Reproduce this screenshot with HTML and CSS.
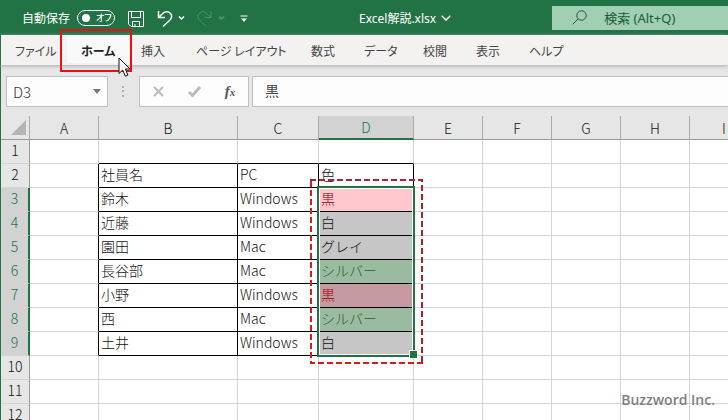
FILE: index.html
```html
<!DOCTYPE html>
<html lang="ja">
<head>
<meta charset="utf-8">
<meta name="viewport" content="width=device-width, initial-scale=1">
<title>Excel解説.xlsx</title>
<link rel="stylesheet" href="styles.css">
</head>
<body>
<header class="titlebar">
  <span class="autosave-label" id="autosave-label">自動保存</span>
  <button class="toggle" type="button" role="switch" aria-checked="false" aria-labelledby="autosave-label"><span class="knob"></span><span class="toggle-text">オフ</span></button>
  <button class="icon-btn save" type="button" aria-label="上書き保存">
    <svg width="16" height="16" viewBox="0 0 16 16"><path d="M.5.5h15v15H3L.5 13zM3.500.5v6h9v-6M4.500 15.500v-5h7v5M7 15v-2"/></svg>
  </button>
  <button class="icon-btn undo" type="button" aria-label="元に戻す">
    <svg width="28" height="18" viewBox="0 0 28 18"><path class="thick" d="M1.500 1v6.500H8M1.500 7.500L6 3.200C8 1.300 11.500 1.300 13.300 3.300S14.800 8 13 10L6 16.500"/><path class="thick" d="M22 6.500l2.500 2.500L27 6.500"/></svg>
  </button>
  <button class="icon-btn redo" type="button" aria-label="やり直し" disabled>
    <svg width="28" height="18" viewBox="0 0 28 18"><path d="M14 1v6.500H7.500M14 7.500L9.500 3.200C7.500 1.300 4 1.300 2.200 3.300S.7 8 2.500 10L9 16.500"/><path class="thick" d="M22 6.500l2.500 2.500L27 6.500"/></svg>
  </button>
  <button class="icon-btn more" type="button" aria-label="クイック アクセス ツール バーのカスタマイズ">
    <svg width="8" height="8" viewBox="0 0 8 8"><path d="M.5 1h7"/><path class="solid" d="M1 3.500L4 7l3-3.500z"/></svg>
  </button>
  <button class="filename" type="button">Excel解説.xlsx
    <svg width="10" height="6" viewBox="0 0 10 6"><path d="M.7.7L5 5 9.300.7"/></svg>
  </button>
  <label class="search">
    <svg width="15" height="15" viewBox="0 0 15 15"><circle cx="9.500" cy="5.500" r="4.700"/><path d="M6 9L.7 14.300"/></svg>
    <input type="text" placeholder="検索 (Alt+Q)" aria-label="検索">
  </label>
</header>

<nav class="tabs" aria-label="リボン">
  <a href="#">ファイル</a>
  <a href="#" class="active" aria-current="page">ホーム</a>
  <a href="#">挿入</a>
  <a href="#">ページ レイアウト</a>
  <a href="#">数式</a>
  <a href="#">データ</a>
  <a href="#">校閲</a>
  <a href="#">表示</a>
  <a href="#">ヘルプ</a>
  <span class="callout"></span>
  <svg class="cursor" width="14" height="21" viewBox="0 0 14 21"><path d="M1 1v15.500l3.700-3.500 2.600 6.200 2.600-1.100L7.300 12H12z"/></svg>
</nav>

<main class="workbook">
  <section class="formula-row" aria-label="数式バー">
    <button class="namebox" type="button">D3
      <svg width="8" height="5" viewBox="0 0 8 5"><path d="M0 0h8L4 5z"/></svg>
    </button>
    <svg class="grip" width="2" height="11" viewBox="0 0 2 11"><path d="M0 0h2v2H0zM0 4h2v2H0zM0 9h2v2H0z"/></svg>
    <div class="fx-buttons">
      <button type="button" aria-label="キャンセル"><svg width="11" height="11" viewBox="0 0 11 11"><path d="M1 1l9 9M10 1l-9 9"/></svg></button>
      <button type="button" aria-label="入力"><svg width="13" height="11" viewBox="0 0 13 11"><path class="check" d="M1 6l3.500 3.500L12 1"/></svg></button>
      <button type="button" class="fx" aria-label="関数の挿入">f<small>x</small></button>
    </div>
    <input class="formula" type="text" value="黒" aria-label="数式">
  </section>

  <div class="sheet">
    <table>
      <colgroup><col class="c-head"><col class="c-std"><col class="c-b"><col class="c-c"><col class="c-d"><col class="c-std"><col class="c-std"><col class="c-std"><col class="c-std"><col class="c-std"></colgroup>
      <thead>
        <tr><th class="corner"><svg width="15" height="15" viewBox="0 0 15 15"><path d="M15 0v15H0z"/></svg></th><th>A</th><th>B</th><th>C</th><th class="sel">D</th><th>E</th><th>F</th><th>G</th><th>H</th><th>I</th></tr>
      </thead>
      <tbody>
        <tr><th>1</th><td></td><td class="kb"></td><td class="kb"></td><td class="kb"></td><td></td><td></td><td></td><td></td><td></td></tr>
        <tr><th>2</th><td class="kr"></td><td class="k">社員名</td><td class="k">PC</td><td class="k">色</td><td></td><td></td><td></td><td></td><td></td></tr>
        <tr class="on"><th>3</th><td class="kr"></td><td class="k">鈴木</td><td class="k">Windows</td><td class="k pink">黒</td><td></td><td></td><td></td><td></td><td></td></tr>
        <tr class="on"><th>4</th><td class="kr"></td><td class="k">近藤</td><td class="k">Windows</td><td class="k gray">白</td><td></td><td></td><td></td><td></td><td></td></tr>
        <tr class="on"><th>5</th><td class="kr"></td><td class="k">園田</td><td class="k">Mac</td><td class="k gray">グレイ</td><td></td><td></td><td></td><td></td><td></td></tr>
        <tr class="on"><th>6</th><td class="kr"></td><td class="k">長谷部</td><td class="k">Mac</td><td class="k green">シルバー</td><td></td><td></td><td></td><td></td><td></td></tr>
        <tr class="on"><th>7</th><td class="kr"></td><td class="k">小野</td><td class="k">Windows</td><td class="k rose">黒</td><td></td><td></td><td></td><td></td><td></td></tr>
        <tr class="on"><th>8</th><td class="kr"></td><td class="k">西</td><td class="k">Mac</td><td class="k green">シルバー</td><td></td><td></td><td></td><td></td><td></td></tr>
        <tr class="on"><th>9</th><td class="kr"></td><td class="k">土井</td><td class="k">Windows</td><td class="k gray">白</td><td></td><td></td><td></td><td></td><td></td></tr>
        <tr><th>10</th><td></td><td></td><td></td><td></td><td></td><td></td><td></td><td></td><td></td></tr>
        <tr><th>11</th><td></td><td></td><td></td><td></td><td></td><td></td><td></td><td></td><td></td></tr>
        <tr><th>12</th><td></td><td></td><td></td><td></td><td></td><td></td><td></td><td></td><td></td></tr>
      </tbody>
    </table>
    <span class="selection"></span>
    <svg class="marquee" width="114" height="185" viewBox="0 0 114 185"><path class="dark" d="M0 1h112v183"/><path class="bright" d="M1 2v182h112"/></svg>
  </div>
</main>
<span class="credit">Buzzword Inc.</span>
</body>
</html>
```
FILE: styles.css
```css
* { box-sizing: border-box; }
body {
  margin: 0;
  height: 100vh;
  overflow: hidden;
  display: flex;
  flex-direction: column;
  position: relative;
  background: #e6e6e6;
  font-family: "Noto Sans", "Noto Sans CJK JP", sans-serif;
  font-size: 12px;
  color: #262626;
}
button, input { font: inherit; color: inherit; border: 0; padding: 0; margin: 0; background: none; }
svg { display: block; fill: none; stroke: currentColor; flex: none; }

.titlebar {
  flex: none;
  display: flex;
  align-items: center;
  height: 35px;
  padding-left: 22px;
  background: #217346;
  color: #fff;
}
.autosave-label { width: 48px; white-space: nowrap; }
.toggle {
  display: flex;
  align-items: center;
  gap: 6px;
  width: 38px;
  height: 16px;
  margin-left: 7px;
  padding-left: 4px;
  border: 1px solid #fff;
  border-radius: 8px;
}
.knob { width: 8px; height: 8px; border-radius: 50%; background: #fff; }
.toggle-text { font-family: "Noto Sans CJK JP", sans-serif; font-feature-settings: "palt"; font-size: 9px; font-weight: 500; line-height: 14px; }
.icon-btn { margin-top: 3px; }
.save { margin-left: 13px; }
.undo { margin-left: 13px; }
.redo { margin-left: 12px; color: #4a9069; }
.more { margin-left: 15px; }
.solid { fill: currentColor; stroke: none; }
.thick { stroke-width: 2; }
.undo .thick { stroke-width: 1.5; }
.filename { display: flex; align-items: center; gap: 5px; margin-left: 111px; white-space: nowrap; }
.filename svg { stroke-width: 1.5; }
.search {
  flex: 1;
  display: flex;
  align-items: center;
  gap: 17px;
  height: 24px;
  min-width: 0;
  margin-left: 101px;
  padding-left: 20px;
  background: #a0cfb3;
  color: #185c37;
}
.search input { flex: 1; min-width: 0; font-size: 13px; }
.search input::placeholder { color: #185c37; opacity: 1; }

.tabs {
  flex: none;
  position: relative;
  z-index: 2;
  display: grid;
  grid-template-columns: 66px 60px 55px 115px 53px 59px 53px 53px auto;
  height: 30px;
  padding-left: 14px;
  background: #f3f2f1;
  border-left: 1px solid #217346;
  box-shadow: 0 1px 4px #aaa;
  font-family: "Noto Sans CJK JP", sans-serif;
  font-feature-settings: "palt";
}
.tabs a { height: 28px; color: #444; text-decoration: none; line-height: 32px; white-space: nowrap; }
.tabs .active { justify-self: start; margin-left: -14px; padding: 0 14px; background: #faf9f9; color: #222; font-weight: 700; }
.callout {
  position: absolute;
  left: 59px;
  top: -6px;
  width: 72px;
  height: 43px;
  border: 2px solid #e81010;
}
.cursor { position: absolute; left: 117px; top: 22px; fill: #fff; stroke: #111; }

.workbook { flex: 1; min-height: 0; border-left: 1px solid #217346; overflow: hidden; }
.formula-row { display: flex; align-items: center; height: 51px; padding: 11px 0 9px 5px; }
.namebox {
  display: flex;
  align-items: center;
  justify-content: space-between;
  width: 102px;
  height: 31px;
  padding: 0 6px;
  background: #fdfdfd;
  border: 1px solid #c0c0c0;
  font-family: "Noto Sans CJK JP", sans-serif;
  font-size: 15px;
  font-weight: 300;
  color: #333;
}
.namebox svg { fill: #777; stroke: none; }
.grip { margin-left: 14px; fill: #b0b0b0; stroke: none; }
.fx-buttons {
  display: grid;
  grid-template-columns: repeat(3, 36px);
  align-items: center;
  justify-items: center;
  width: 110px;
  height: 31px;
  margin-left: 15px;
  background: #fdfdfd;
  border: 1px solid #c0c0c0;
}
.fx-buttons svg { stroke: #bbb; stroke-width: 2; }
.fx-buttons .check { stroke-width: 3; }
.fx { font: italic 700 15px "Liberation Serif", serif; color: #555; }
.fx small { font-size: 11px; }
.formula {
  flex: 1;
  min-width: 0;
  height: 31px;
  margin-left: 3px;
  padding: 0 0 4px 12px;
  background: #fdfdfd;
  border: 1px solid #c0c0c0;
  border-right: 0;
  font-size: 14px;
  color: #444;
}

.sheet { position: relative; }
table { width: 758px; table-layout: fixed; border-spacing: 0; background: #fff; font-family: "Noto Sans CJK JP", sans-serif; font-weight: 300; font-size: 14px; }
.c-head { width: 29px; }
.c-std { width: 69px; }
.c-b { width: 139px; }
.c-c { width: 81px; }
.c-d { width: 95px; }
th, td { height: 24px; padding: 0 0 4px 2px; border-right: 1px solid #d4d4d4; border-bottom: 1px solid #d4d4d4; line-height: 18px; text-align: left; white-space: nowrap; color: #111; }
th { padding: 0 0 4px; background: #e6e6e6; font-weight: 300; text-align: center; }
thead th { padding: 0; border-bottom-color: #999; border-right-color: #aaa; }
tbody th { border-right-color: #999; }
thead .sel { background: #d2d2d2; color: #217346; border-bottom: 2px solid #217346; }
.on th { background: #d2d2d2; color: #217346; border-right: 2px solid #217346; }
.corner svg { margin-left: 10px; fill: #b4b4b4; stroke: none; }
.k { border-color: #000; }
.kb { border-bottom-color: #000; }
.kr { border-right-color: #000; }
.pink { background: #ffc7ce; color: #9c0006; }
.gray { background: #c6c6c6; }
.green { background: #9bbba0; color: #1f6034; }
.rose { background: #c69aa1; color: #9c0006; }

.selection { position: absolute; left: 316px; top: 70px; width: 98px; height: 171px; border: 2px solid #217346; box-shadow: inset 0 0 0 1px #fff; }
.selection::after { content: ""; position: absolute; right: -4px; bottom: -3px; width: 7px; height: 7px; background: #217346; border: solid #fff; border-width: 1px 0 0 1px; }
.marquee { position: absolute; left: 309px; top: 63px; stroke-width: 2; stroke-dasharray: 6 3; }
.dark { stroke: #a52630; }
.bright { stroke: #e01818; }
.credit { position: absolute; right: 13px; bottom: 10px; font-family: "Open Sans", sans-serif; font-weight: 600; font-size: 14px; line-height: 20px; color: #7f7f7f; }
```
